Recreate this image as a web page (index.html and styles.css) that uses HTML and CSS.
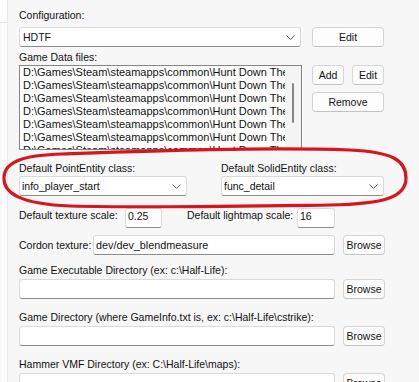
FILE: index.html
```html
<!DOCTYPE html>
<html lang="en">
<head>
    <meta charset="UTF-8">
    <title>Hammer Options</title>
    <link rel="stylesheet" href="styles.css">
</head>
<body>
    <div class="dialog">
        <div class="edge"><div class="edge-top"></div></div>
        <div class="main">
            <div class="label">Configuration:</div>
            <div class="row config-row">
                <div class="field combo config-combo">
                    <span>HDTF</span>
                    <svg width="9" height="5" viewBox="0 0 9 5"><polyline points="0.5,0.5 4.5,4.5 8.5,0.5" fill="none" stroke="#5f5f5f" stroke-width="1"/></svg>
                </div>
                <button class="btn btn-wide config-edit">Edit</button>
            </div>

            <div class="label data-label">Game Data files:</div>
            <div class="row data-row">
                <div class="listbox">
                    <div class="list-items">
                        <div class="list-item">D:\Games\Steam\steamapps\common\Hunt Down The</div>
                        <div class="list-item">D:\Games\Steam\steamapps\common\Hunt Down The</div>
                        <div class="list-item">D:\Games\Steam\steamapps\common\Hunt Down The</div>
                        <div class="list-item">D:\Games\Steam\steamapps\common\Hunt Down The</div>
                        <div class="list-item">D:\Games\Steam\steamapps\common\Hunt Down The</div>
                        <div class="list-item">D:\Games\Steam\steamapps\common\Hunt Down The</div>
                        <div class="list-item">D:\Games\Steam\steamapps\common\Hunt Down The</div>
                    </div>
                    <div class="scrollbar"><div class="thumb"></div></div>
                </div>
                <div class="list-buttons">
                    <div class="btn-pair">
                        <button class="btn btn-small">Add</button>
                        <button class="btn btn-small">Edit</button>
                    </div>
                    <button class="btn btn-wide btn-remove">Remove</button>
                </div>
            </div>

            <div class="entity-row">
                <div class="entity-col point-col">
                    <div class="label">Default PointEntity class:</div>
                    <div class="field combo entity-combo">
                        <span>info_player_start</span>
                        <svg width="9" height="5" viewBox="0 0 9 5"><polyline points="0.5,0.5 4.5,4.5 8.5,0.5" fill="none" stroke="#5f5f5f" stroke-width="1"/></svg>
                    </div>
                </div>
                <div class="entity-col solid-col">
                    <div class="label">Default SolidEntity class:</div>
                    <div class="field combo entity-combo">
                        <span>func_detail</span>
                        <svg width="9" height="5" viewBox="0 0 9 5"><polyline points="0.5,0.5 4.5,4.5 8.5,0.5" fill="none" stroke="#5f5f5f" stroke-width="1"/></svg>
                    </div>
                </div>
            </div>

            <div class="row scale-row">
                <div class="label texture-label">Default texture scale:</div>
                <div class="field scale-box texture-box">0.25</div>
                <div class="label lightmap-label">Default lightmap scale:</div>
                <div class="field scale-box lightmap-box">16</div>
            </div>

            <div class="row cordon-row">
                <div class="label cordon-label">Cordon texture:</div>
                <div class="field text-input cordon-input">dev/dev_blendmeasure</div>
                <button class="btn btn-browse">Browse</button>
            </div>

            <div class="dir-field">
                <div class="label dir-label">Game Executable Directory (ex: c:\Half-Life):</div>
                <div class="row">
                    <div class="field text-input dir-input"></div>
                    <button class="btn btn-browse">Browse</button>
                </div>
            </div>

            <div class="dir-field">
                <div class="label dir-label">Game Directory (where GameInfo.txt is, ex: c:\Half-Life\cstrike):</div>
                <div class="row">
                    <div class="field text-input dir-input"></div>
                    <button class="btn btn-browse">Browse</button>
                </div>
            </div>

            <div class="dir-field">
                <div class="label dir-label">Hammer VMF Directory (ex: C:\Half-Life\maps):</div>
                <div class="row">
                    <div class="field text-input dir-input"></div>
                    <button class="btn btn-browse">Browse</button>
                </div>
            </div>
        </div>

        <!-- hand-drawn red circle around the entity class pickers -->
        <svg class="highlight" width="419" height="382" viewBox="0 0 419 382">
            <path d="M 62 154 C 28 155, 5 160, 4 177 C 3 194, 22 204, 70 206 C 150 208, 260 206, 330 205 C 385 204, 406 197, 406 178 C 406 160, 392 152, 350 150 C 260 147, 150 151, 62 154 Z" fill="none" stroke="#d8141c" stroke-width="3.2" stroke-linecap="round"/>
        </svg>
    </div>
</body>
</html>
```

FILE: styles.css
```css
body {
    margin: 0;
    font-family: "Liberation Sans", Arial, sans-serif;
    font-size: 10.5px;
    color: #111;
    background: #f7f7f7;
}
.dialog {
    position: relative;
    display: flex;
    width: 419px;
    height: 382px;
    overflow: hidden;
}
.edge {
    width: 7px;
    flex: none;
    background: #fbfbfb;
    border-right: 1px solid #e8e8e8;
}
.edge-top {
    height: 22px;
    background: #fdfdfd;
    border-bottom: 1px solid #e3e3e3;
}
.main {
    flex: 1;
    padding: 8px 0 0 11px;
}
.label {
    line-height: 14px;
    white-space: nowrap;
}
.row {
    display: flex;
    align-items: flex-start;
}
.field {
    box-sizing: border-box;
    height: 20px;
    background: #fff;
    border: 1px solid #dadada;
    border-bottom-color: #8c8c8c;
    border-radius: 3px;
    line-height: 18px;
    display: flex;
    align-items: center;
    overflow: hidden;
    white-space: nowrap;
}
.combo {
    justify-content: space-between;
}
.combo svg {
    flex: none;
    margin-right: 5px;
}
.btn {
    box-sizing: border-box;
    height: 20px;
    padding: 0;
    background: #fdfdfd;
    border: 1px solid #d5d5d5;
    border-bottom-color: #c2c2c2;
    border-radius: 4px;
    font: inherit;
    color: inherit;
    line-height: 18px;
    text-align: center;
}

/* configuration */
.config-row {
    margin-top: 5px;
}
.config-combo {
    width: 282px;
    padding-left: 3px;
}
.btn-wide {
    width: 72px;
}
.config-edit {
    margin-left: 11px;
}

/* game data files */
.data-label {
    margin-top: 3px;
}
.data-row {
    margin-top: 1px;
}
.listbox {
    box-sizing: border-box;
    width: 283px;
    height: 85px;
    flex: none;
    border: 1px solid #858585;
    background: #fff;
    display: flex;
    overflow: hidden;
}
.list-items {
    flex: 1;
    min-width: 0;
    overflow: hidden;
    padding: 0 0 0 3px;
}
.list-item {
    font-size: 11px;
    line-height: 13px;
    white-space: nowrap;
}
.scrollbar {
    width: 16px;
    flex: none;
    background: #f4f4f4;
}
.thumb {
    width: 2px;
    height: 40px;
    margin: 17px 0 0 7px;
    background: #858585;
    border-radius: 1px;
}
.list-buttons {
    margin-left: 10px;
    width: 72px;
}
.btn-pair {
    display: flex;
    gap: 8px;
}
.btn-small {
    width: 32px;
}
.btn-remove {
    margin-top: 7px;
}

/* entity classes */
.entity-row {
    display: flex;
    gap: 34px;
    margin-top: 11px;
}
.point-col {
    width: 168px;
}
.solid-col {
    width: 163px;
}
.entity-combo {
    margin-top: 1px;
    padding-left: 2px;
}

/* scales */
.scale-row {
    margin-top: 12px;
}
.texture-label {
    width: 106px;
}
.scale-box {
    align-items: flex-start;
    line-height: 14px;
    padding-left: 2px;
}
.texture-box {
    width: 37px;
}
.lightmap-label {
    width: 110px;
    margin-left: 25px;
}
.lightmap-box {
    width: 38px;
}

/* cordon + directories */
.cordon-row {
    margin-top: 7px;
    align-items: center;
}
.cordon-label {
    width: 74px;
}
.text-input {
    padding-left: 2px;
    font-size: 10.8px;
}
.cordon-input {
    width: 242px;
}
.btn-browse {
    width: 42px;
    margin-left: 8px;
}
.dir-field {
    margin-top: 10px;
}
.cordon-row + .dir-field {
    margin-top: 7px;
}
.dir-label {
    line-height: 16px;
    margin-bottom: 1px;
}
.dir-input {
    width: 316px;
}

.highlight {
    position: absolute;
    left: 0;
    top: 0;
    pointer-events: none;
}
```
